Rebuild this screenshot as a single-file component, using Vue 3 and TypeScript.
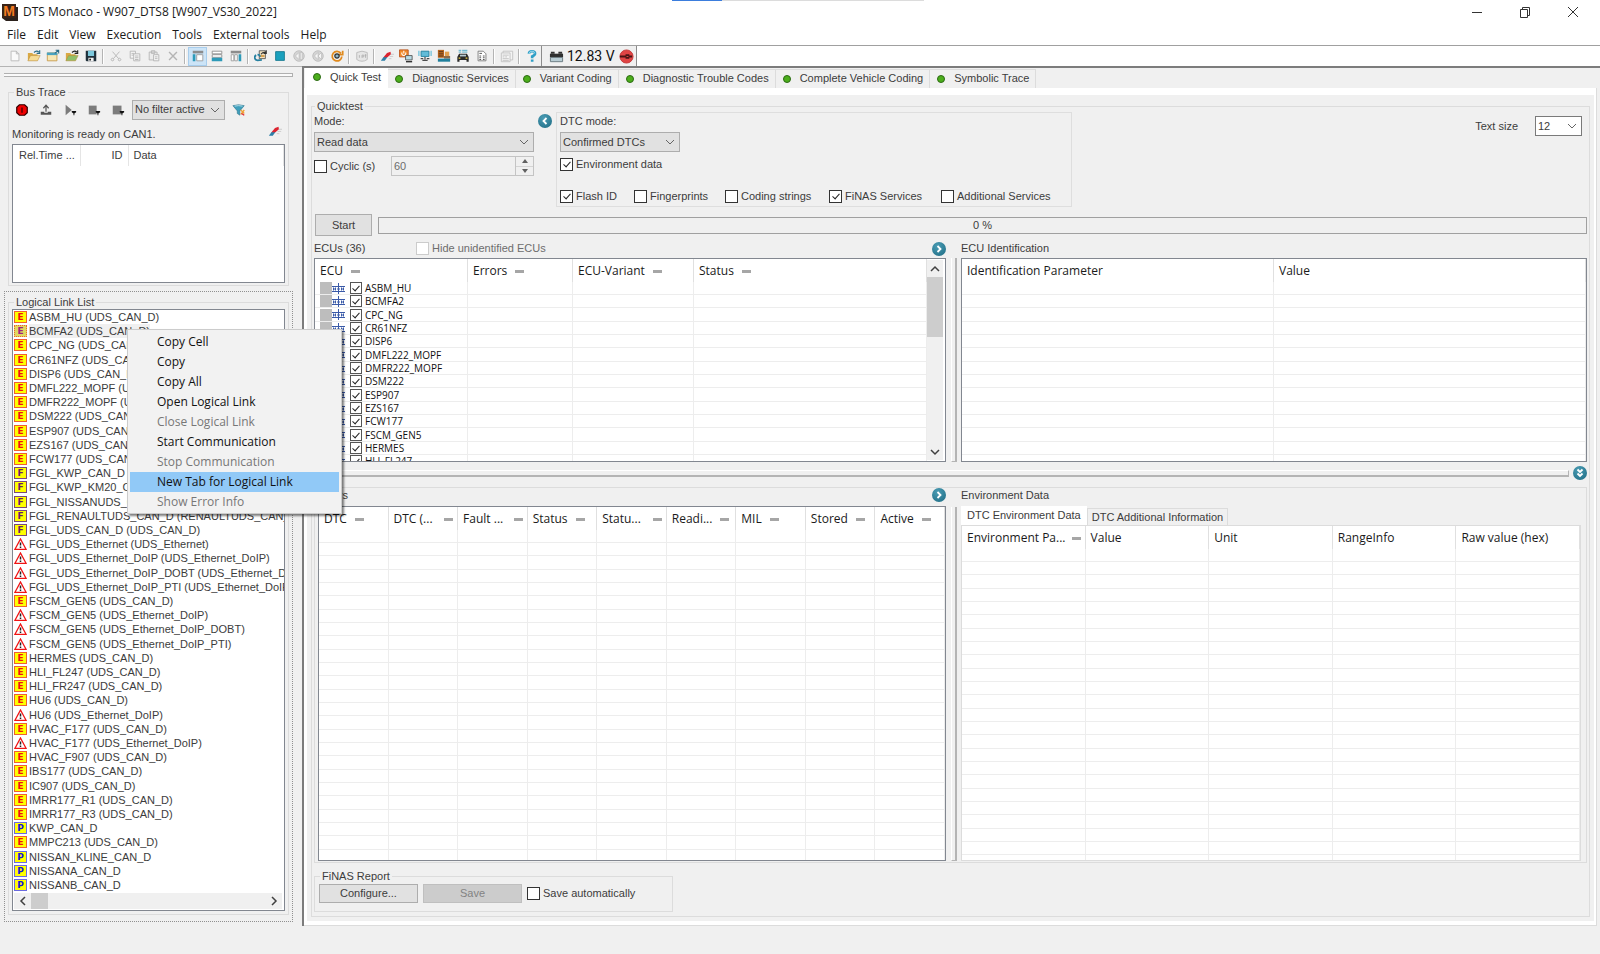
<script setup lang="ts">
import { ref } from 'vue'

interface Shape { d: string; f?: string; s?: string; w?: number }
interface Tool { label: string; shapes: Shape[]; active?: boolean; off?: boolean }
interface Column { title: string; width?: number; mark?: boolean; cut?: boolean }

const folder = (arrow: string, body = '#f5dc96'): Shape[] => [
  { d: 'M1 13V4.500H6L7 6H12V13Z', f: '#d9a945' },
  { d: 'M1 13.500L4 7.500H15L12 13.500Z', f: body, s: '#b98a35', w: 0.6 },
  { d: 'M8 4Q11 1 13.500 3.500M14.500 1.500V5H11', s: arrow, w: 1.3 },
]

const toolGroups: Tool[][] = [
  [
    { label: 'New', off: true, shapes: [{ d: 'M3.500 2.500H9.500L12.500 5.500V13.500H3.500ZM9.500 2.500V5.500H12.500', f: '#fafafa', s: '#b8b8b8' }] },
    { label: 'Open', shapes: folder('#2b6d86') },
    { label: 'Open workspace', shapes: [
      { d: 'M1.500 4.500H12.500V13.500H1.500Z', f: '#f7e7b5', s: '#c79a4a' },
      { d: 'M1 4H13V7H1Z', f: '#4aa3c0' },
      { d: 'M10 5L14 1.500M11 1.500H14.500V5', s: '#2b6d86', w: 1.2 },
    ] },
    { label: 'Import', shapes: folder('#222222', '#8fbf6a') },
    { label: 'Save', shapes: [
      { d: 'M2 2H14V14H3L2 13Z', f: '#1f2f3a' },
      { d: 'M4.500 2H11.500V8H4.500Z', f: '#7cc8dc' },
      { d: 'M5 10H11V14H5Z', f: '#f2f2f2' },
      { d: 'M6 11H8V13H6Z', f: '#222222' },
    ] },
  ],
  [
    { label: 'Cut', off: true, shapes: [{ d: 'M4 3L11 11M12 3L5 11M5 11A1.500 1.500 0 1 0 4.500 13.500A1.500 1.500 0 0 0 5 11M11 11A1.500 1.500 0 1 1 11.500 13.500A1.500 1.500 0 0 1 11 11', s: '#b4b4b4' }] },
    { label: 'Copy', off: true, shapes: [
      { d: 'M2.500 2.500H8.500V10.500H2.500ZM4 5H7M4 7H7', f: '#f6f6f6', s: '#b4b4b4' },
      { d: 'M6.500 5.500H13.500V13.500H6.500ZM8 8H12M8 10H12M8 12H12', f: '#f6f6f6', s: '#b4b4b4' },
    ] },
    { label: 'Paste', off: true, shapes: [
      { d: 'M2.500 3.500H11.500V12.500H2.500ZM5 2H9V5H5Z', f: '#ececec', s: '#b4b4b4' },
      { d: 'M7.500 6.500H13.500V13.500H7.500ZM9 9H12M9 11H12', f: '#f6f6f6', s: '#b4b4b4' },
    ] },
    { label: 'Delete', off: true, shapes: [{ d: 'M3.500 3.500L12.500 12.500M12.500 3.500L3.500 12.500', s: '#b4b4b4', w: 1.6 }] },
  ],
  [
    { label: 'Layout left', active: true, shapes: [
      { d: 'M2 2H14V5H2Z', f: '#8c8c8c' }, { d: 'M2 6H5V14H2Z', f: '#2d9ab8' },
      { d: 'M6.500 6.500H13.500V13.500H6.500Z', f: '#ffffff', s: '#9a9a9a' },
    ] },
    { label: 'Layout rows', shapes: [
      { d: 'M2.500 2.500H13.500V5.500H2.500ZM2.500 6.500H13.500V9.500H2.500Z', f: '#ffffff', s: '#8c8c8c' },
      { d: 'M2 10H14V14H2Z', f: '#2d9ab8' },
    ] },
    { label: 'Layout columns', shapes: [
      { d: 'M2 2H14V5H2Z', f: '#8c8c8c' },
      { d: 'M2.500 6.500H5.500V13.500H2.500ZM6.500 6.500H9.500V13.500H6.500Z', f: '#ffffff', s: '#9a9a9a' },
      { d: 'M11 6H14V14H11Z', f: '#2d9ab8' },
    ] },
  ],
  [
    { label: 'Restart', shapes: [
      { d: 'M6 2H13V11H6Z', f: '#f4e3c0', s: '#555555' },
      { d: 'M8 6Q10 3 14 4M14 1.500V5H11', s: '#333333', w: 1.3 },
      { d: 'M7 8H12', s: '#c98323', w: 1.6 },
      { d: 'M2.500 7A3.200 3.200 0 0 0 4 13L9 12.500M4 6.500Q6.500 6.500 7 9', s: '#2680a0', w: 2 },
    ] },
    { label: 'Stop', shapes: [{ d: 'M3 3H13V13H3Z', f: '#1aa0bd', s: '#13778f' }] },
    { label: 'Back', off: true, shapes: [{ d: 'M8 2A6 6 0 1 0 8 14A6 6 0 1 0 8 2', f: '#d4d4d4', s: '#bcbcbc' }, { d: 'M8 4V12L4 8ZM9.500 4H11.500V12H9.500Z', f: '#f6f6f6', s: '#b0b0b0', w: 0.6 }] },
    { label: 'Previous', off: true, shapes: [{ d: 'M8 2A6 6 0 1 0 8 14A6 6 0 1 0 8 2', f: '#d4d4d4', s: '#bcbcbc' }, { d: 'M8 4V12L4 8ZM12 4V12L8 8Z', f: '#f6f6f6', s: '#b0b0b0', w: 0.6 }] },
    { label: 'Refresh', shapes: [
      { d: 'M12.500 5A5.500 5.500 0 1 0 13.500 8.500M14.500 2V6.500H10', s: '#e08a1e', w: 2 },
      { d: 'M8 5.500A2.500 2.500 0 1 0 8 10.500A2.500 2.500 0 1 0 8 5.500', f: '#8fb5c4', s: '#333333', w: 1.4 },
    ] },
  ],
  [
    { label: 'Java job', off: true, shapes: [
      { d: 'M2 4Q8 1 14 4V12Q8 16 2 12Z', f: '#e6e6e6', s: '#b8b8b8' },
      { d: 'M5 7V10M8 10V7H10V9H8M12 6V10M11 7H13', s: '#b0b0b0' },
    ] },
  ],
  [
    { label: 'Erase', shapes: [
      { d: 'M1 13.500L4 9H8.500L5.500 13.500Z', f: '#2d7fa8' },
      { d: 'M4 9.500L8 4.500L12 3L12.500 6L8.500 9.500Z', f: '#dc2430' },
      { d: 'M12.500 6H16M11 8.500H15M10 11H13', s: '#c8c8c8' },
    ] },
    { label: 'Flash', shapes: [
      { d: 'M0.500 1H10.500V9H0.500Z', f: '#f08a2c', s: '#b8541c' },
      { d: 'M3.500 4A2.300 2.300 0 1 0 7.500 4M5.500 2V5', s: '#ffffff', w: 1.2 },
      { d: 'M7.500 7.500H15V12.500H7.500Z', f: '#b9dbe4', s: '#555555' },
      { d: 'M8 14.500H15', s: '#333333', w: 1.6 },
    ] },
    { label: 'Remote', shapes: [
      { d: 'M3.500 2.500H12.500V8.500H3.500Z', f: '#62bcd8', s: '#1f7f9c' },
      { d: 'M1 2V8M15 2V8', s: '#7cc6dc', w: 1.6 },
      { d: 'M8 9V12M5 13H11M3 11H6M10 11H13', s: '#4c4c4c', w: 1.4 },
    ] },
    { label: 'Modules', shapes: [
      { d: 'M1 1H8V10H1Z', f: '#b8641c' }, { d: 'M9 3H14V8H9Z', f: '#e0a050' },
      { d: 'M2 3H7M2 5.500H7M2 8H7', s: '#54361d' },
      { d: 'M8 8H15V11H8Z', f: '#8a6a4a' }, { d: 'M1 11H15V14.500H1Z', f: '#1f7f9c' },
    ] },
    { label: 'Vehicle', shapes: [
      { d: 'M3 1.500H6M7 1.500H13M3 3.500H6M7 3.500H13', s: '#45a5c4' },
      { d: 'M1.500 9L3.500 5.500H12.500L14.500 9V14.500H12V12.500H4V14.500H1.500Z', f: '#2a2a2a' },
      { d: 'M3 10.500H5M11 10.500H13', s: '#f0d040', w: 1.4 }, { d: 'M4.500 6.500H11.500V8.500H4.500Z', f: '#b8cbd2' },
    ] },
    { label: 'Report', shapes: [
      { d: 'M3.500 2.500H9.500L12.500 5.500V13.500H3.500Z', f: '#ffffff', s: '#777777' },
      { d: 'M5 5H8M5 8H7M9 8H11M5 10H7M9 10H11M5 12H7M9 12H11', s: '#444444' },
    ] },
  ],
  [
    { label: 'Overview', off: true, shapes: [{ d: 'M1.500 4.500H11.500V14.500H1.500ZM3.500 4.500V2.500H14.500V12.500H11.500M3 7H10M3 9H5M6 9H8M3 11H10M3 13H10', f: '#f4f4f4', s: '#c0c0c0' }] },
  ],
  [
    { label: 'Help', shapes: [
      { d: 'M4.500 5.500Q4.500 2.500 8 2.500Q11.500 2.500 11.500 5.200Q11.500 7 8.200 8.500V10.500M8.200 12V14.500', s: '#2f9fc6', w: 3 },
      { d: 'M4.500 5.500Q5 2.500 8 2.500Q11 2.500 11 5', s: '#a8e0f2', w: 1 },
    ] },
  ],
]

const menus = ['File', 'Edit', 'View', 'Execution', 'Tools', 'External tools', 'Help']
const tabs = ['Quick Test', 'Diagnostic Services', 'Variant Coding', 'Diagnostic Trouble Codes', 'Complete Vehicle Coding', 'Symbolic Trace']
const activeTab = ref('Quick Test')

const traceTools: Tool[] = [
  { label: 'Record', shapes: [{ d: 'M5 2H11L14 5V11L11 14H5L2 11V5Z', f: '#f00000', s: '#300000', w: 1.4 }, { d: 'M8 5V11', s: '#600000', w: 1.8 }] },
  { label: 'Export', shapes: [{ d: 'M8 3V10M5 6L8 2.500L11 6', s: '#555555', w: 1.4 }, { d: 'M2 10H6V11H10V10H14V13.500H2Z', f: '#555555' }] },
  { label: 'Play', shapes: [{ d: 'M3 2L10 8L3 14Z', f: '#7c7c7c' }, { d: 'M10 9H15V10.500L13 12V14H12V12L10 10.500Z', f: '#111111' }] },
  { label: 'Stop', shapes: [{ d: 'M2 3H11V13H2Z', f: '#7c7c7c' }, { d: 'M10 9H15V10.500L13 12V14H12V12L10 10.500Z', f: '#111111' }] },
  { label: 'Pause', shapes: [{ d: 'M2 3H12V13H2Z', f: '#7c7c7c' }, { d: 'M10 9H15V10.500L13 12V14H12V12L10 10.500Z', f: '#111111' }] },
]
const filterShapes: Shape[] = [
  { d: 'M1 3Q7.500 1 14 3L9 9V14L6 12V9Z', f: '#3f9fbc', s: '#2a6f86', w: 0.6 },
  { d: 'M3 3.500Q7.500 2.500 12 3.500', s: '#c4e6f0' },
  { d: 'M10 8L14 12M10 13L14 8', s: '#f0a030', w: 1.6 },
  { d: 'M11 12L14 14', s: '#dc2430', w: 1.4 },
]
const eraseShapes: Shape[] = toolGroups[5][0].shapes

const links: [string, string][] = [
  ['E', 'ASBM_HU (UDS_CAN_D)'], ['E', 'BCMFA2 (UDS_CAN_D)'], ['E', 'CPC_NG (UDS_CAN_D)'],
  ['E', 'CR61NFZ (UDS_CAN_D)'], ['E', 'DISP6 (UDS_CAN_D)'], ['E', 'DMFL222_MOPF (UDS_CAN_D)'],
  ['E', 'DMFR222_MOPF (UDS_CAN_D)'], ['E', 'DSM222 (UDS_CAN_D)'], ['E', 'ESP907 (UDS_CAN_D)'],
  ['E', 'EZS167 (UDS_CAN_D)'], ['E', 'FCW177 (UDS_CAN_D)'], ['F', 'FGL_KWP_CAN_D'],
  ['F', 'FGL_KWP_KM20_CAN_D'], ['F', 'FGL_NISSANUDS_CAN_D'], ['F', 'FGL_RENAULTUDS_CAN_D (RENAULTUDS_CAN_D)'],
  ['F', 'FGL_UDS_CAN_D (UDS_CAN_D)'], ['!', 'FGL_UDS_Ethernet (UDS_Ethernet)'],
  ['!', 'FGL_UDS_Ethernet_DoIP (UDS_Ethernet_DoIP)'], ['!', 'FGL_UDS_Ethernet_DoIP_DOBT (UDS_Ethernet_DoIP_DOBT)'],
  ['!', 'FGL_UDS_Ethernet_DoIP_PTI (UDS_Ethernet_DoIP_PTI)'], ['E', 'FSCM_GEN5 (UDS_CAN_D)'],
  ['!', 'FSCM_GEN5 (UDS_Ethernet_DoIP)'], ['!', 'FSCM_GEN5 (UDS_Ethernet_DoIP_DOBT)'],
  ['!', 'FSCM_GEN5 (UDS_Ethernet_DoIP_PTI)'], ['E', 'HERMES (UDS_CAN_D)'], ['E', 'HLI_FL247 (UDS_CAN_D)'],
  ['E', 'HLI_FR247 (UDS_CAN_D)'], ['E', 'HU6 (UDS_CAN_D)'], ['!', 'HU6 (UDS_Ethernet_DoIP)'],
  ['E', 'HVAC_F177 (UDS_CAN_D)'], ['!', 'HVAC_F177 (UDS_Ethernet_DoIP)'], ['E', 'HVAC_F907 (UDS_CAN_D)'],
  ['E', 'IBS177 (UDS_CAN_D)'], ['E', 'IC907 (UDS_CAN_D)'], ['E', 'IMRR177_R1 (UDS_CAN_D)'],
  ['E', 'IMRR177_R3 (UDS_CAN_D)'], ['P', 'KWP_CAN_D'], ['E', 'MMPC213 (UDS_CAN_D)'],
  ['P', 'NISSAN_KLINE_CAN_D'], ['P', 'NISSANA_CAN_D'], ['P', 'NISSANB_CAN_D'],
]

const menuItems: [string, boolean][] = [
  ['Copy Cell', true], ['Copy', true], ['Copy All', true], ['Open Logical Link', true],
  ['Close Logical Link', false], ['Start Communication', true], ['Stop Communication', false],
  ['New Tab for Logical Link', true], ['Show Error Info', false],
]

const options = ref([
  { label: 'Flash ID', on: true, width: 74 },
  { label: 'Fingerprints', on: false, width: 91 },
  { label: 'Coding strings', on: false, width: 104 },
  { label: 'FiNAS Services', on: true, width: 112 },
  { label: 'Additional Services', on: false, width: 120 },
])

const ecuColumns: Column[] = [
  { title: 'ECU', width: 153, mark: true }, { title: 'Errors', width: 105, mark: true },
  { title: 'ECU-Variant', width: 121, mark: true }, { title: 'Status', mark: true },
]
const ecus = ref(['ASBM_HU', 'BCMFA2', 'CPC_NG', 'CR61NFZ', 'DISP6', 'DMFL222_MOPF', 'DMFR222_MOPF', 'DSM222',
  'ESP907', 'EZS167', 'FCW177', 'FSCM_GEN5', 'HERMES', 'HLI_FL247'].map((name) => ({ name, on: true })))
const identColumns: Column[] = [{ title: 'Identification Parameter' }, { title: 'Value' }]
const errorColumns: Column[] = [
  { title: 'DTC', mark: true }, { title: 'DTC (...', mark: true, cut: true }, { title: 'Fault ...', mark: true, cut: true },
  { title: 'Status', mark: true }, { title: 'Statu...', mark: true, cut: true }, { title: 'Readi...', mark: true },
  { title: 'MIL', mark: true }, { title: 'Stored', mark: true }, { title: 'Active', mark: true },
]
const envColumns: Column[] = [
  { title: 'Environment Pa...', mark: true, cut: true }, { title: 'Value' }, { title: 'Unit' },
  { title: 'RangeInfo' }, { title: 'Raw value (hex)' },
]

const cyclic = ref(false)
const envData = ref(true)
const hideEcus = ref(false)
const autoSave = ref(false)
</script>

<template>
  <div class="app">
    <header class="titlebar">
      <svg class="logo" viewBox="0 0 18 18" width="18" height="18">
        <path d="M4 4H17V18H5L1 15V2Z" fill="#2b211c" />
        <path d="M1 1H15V15H1Z" fill="#3a2317" />
        <text x="8" y="13" text-anchor="middle" class="logo-letter">M</text>
      </svg>
      <h1>DTS Monaco - W907_DTS8 [W907_VS30_2022]</h1>
      <span class="drag-hint"></span>
      <div class="window-buttons">
        <button type="button" aria-label="Minimize"><svg viewBox="0 0 12 12"><path d="M1 6.500H11" /></svg></button>
        <button type="button" aria-label="Restore"><svg viewBox="0 0 12 12"><path d="M1.500 3.500H8.500V11.500H1.500ZM3.500 3.500V1.500H10.500V9.500H8.500" /></svg></button>
        <button type="button" aria-label="Close"><svg viewBox="0 0 12 12"><path d="M1 1L11 11M11 1L1 11" /></svg></button>
      </div>
    </header>

    <nav class="menubar">
      <button v-for="m in menus" :key="m" type="button">{{ m }}</button>
    </nav>

    <div class="toolbar">
      <div class="tools">
        <template v-for="(group, g) in toolGroups" :key="g">
          <span v-if="g > 0" class="sep"></span>
          <button v-for="t in group" :key="t.label" type="button" class="tool" :class="{ active: t.active }" :aria-label="t.label" :disabled="t.off">
            <svg viewBox="0 0 16 16"><path v-for="(s, i) in t.shapes" :key="i" :d="s.d" :fill="s.f ?? 'none'" :stroke="s.s ?? 'none'" :stroke-width="s.w ?? 1" /></svg>
          </button>
        </template>
      </div>
      <div class="voltage">
        <svg viewBox="0 0 16 16" width="15" height="15">
          <path d="M2 3H6V5H2ZM10 3H14V5H10Z" fill="#333" />
          <path d="M1 5H15V9H1Z" fill="#2f2f2f" />
          <path d="M1.500 9H14.500V13.500H1.500Z" fill="#b9cdd4" stroke="#6a7a80" />
        </svg>
        <span>12.83 V</span>
        <svg viewBox="0 0 16 16" width="15" height="15">
          <circle cx="8" cy="8" r="7" fill="#e04444" stroke="#c43c3c" />
          <path d="M1 7H7V5.500H11V10.500H7V9H1ZM11 7H14V9H11Z" fill="#4a1414" />
          <path d="M8 8H10" stroke="#e04444" />
        </svg>
      </div>
    </div>

    <div class="workspace">
      <aside class="side">
        <div class="grip"></div>
        <fieldset class="trace">
          <legend>Bus Trace</legend>
          <div class="trace-bar">
            <div class="trace-tools">
              <button v-for="t in traceTools" :key="t.label" type="button" class="trace-tool" :aria-label="t.label">
                <svg viewBox="0 0 16 16"><path v-for="(s, i) in t.shapes" :key="i" :d="s.d" :fill="s.f ?? 'none'" :stroke="s.s ?? 'none'" :stroke-width="s.w ?? 1" /></svg>
              </button>
            </div>
            <span class="combo filter">
              <select aria-label="Filter"><option>No filter active</option></select>
              <svg viewBox="0 0 10 6"><path d="M1 1L5 5L9 1" /></svg>
            </span>
            <button type="button" class="trace-tool" aria-label="Edit filter">
              <svg viewBox="0 0 16 16"><path v-for="(s, i) in filterShapes" :key="i" :d="s.d" :fill="s.f ?? 'none'" :stroke="s.s ?? 'none'" :stroke-width="s.w ?? 1" /></svg>
            </button>
          </div>
          <div class="trace-state">
            <span>Monitoring is ready on CAN1.</span>
            <button type="button" class="trace-tool" aria-label="Clear trace">
              <svg viewBox="0 0 16 16"><path v-for="(s, i) in eraseShapes" :key="i" :d="s.d" :fill="s.f ?? 'none'" :stroke="s.s ?? 'none'" :stroke-width="s.w ?? 1" /></svg>
            </button>
          </div>
          <div class="trace-list">
            <table>
              <thead><tr><th class="time">Rel.Time ...</th><th class="id">ID</th><th>Data</th></tr></thead>
            </table>
          </div>
        </fieldset>

        <div class="focus-frame">
          <fieldset class="links">
            <legend>Logical Link List</legend>
            <div class="link-box">
              <ul>
                <li v-for="(l, i) in links" :key="l[1]" :class="{ current: i === 1 }">
                  <svg v-if="l[0] === '!'" class="warn" viewBox="0 0 13 12">
                    <path d="M6.500 1L12 11.300H1Z" fill="#fff" stroke="#f01414" stroke-width="1.300" />
                    <path d="M6.500 4.500V7.500M6.500 8.500V10" stroke="#222" stroke-width="1.500" />
                  </svg>
                  <span v-else class="badge" :class="'kind-' + l[0]">{{ l[0] }}</span>
                  <span class="link-name">{{ l[1] }}</span>
                </li>
              </ul>
              <div class="hscroll">
                <button type="button" aria-label="Scroll left"><svg viewBox="0 0 8 10"><path d="M6 1L2 5L6 9" /></svg></button>
                <span class="thumb"></span>
                <button type="button" aria-label="Scroll right"><svg viewBox="0 0 8 10"><path d="M2 1L6 5L2 9" /></svg></button>
              </div>
            </div>
          </fieldset>
        </div>
      </aside>

      <main class="main">
        <div class="tabs" role="tablist">
          <button v-for="t in tabs" :key="t" type="button" role="tab" :aria-selected="t === activeTab" :class="{ on: t === activeTab }" @click="activeTab = t">
            <i class="dot"></i>{{ t }}
          </button>
        </div>
        <div class="page">
          <div class="panel">
            <fieldset class="quick">
              <legend>Quicktest</legend>
              <div class="settings">
                <div class="mode">
                  <label for="mode">Mode:</label>
                  <span class="combo">
                    <select id="mode"><option>Read data</option></select>
                    <svg viewBox="0 0 10 6"><path d="M1 1L5 5L9 1" /></svg>
                  </span>
                  <div class="cyclic">
                    <label class="check"><input v-model="cyclic" type="checkbox" />Cyclic (s)</label>
                    <span class="spin">
                      <input type="text" value="60" aria-label="Cycle seconds" disabled />
                      <span class="spin-buttons">
                        <button type="button" aria-label="Increase"><svg viewBox="0 0 6 4"><path d="M0 4L3 0L6 4Z" /></svg></button>
                        <button type="button" aria-label="Decrease"><svg viewBox="0 0 6 4"><path d="M0 0L3 4L6 0Z" /></svg></button>
                      </span>
                    </span>
                  </div>
                </div>
                <button type="button" class="round" aria-label="Collapse options"><svg viewBox="0 0 14 14"><path d="M8.500 4L5.500 7L8.500 10" /></svg></button>
                <div class="dtc">
                  <label for="dtc">DTC mode:</label>
                  <span class="combo">
                    <select id="dtc"><option>Confirmed DTCs</option></select>
                    <svg viewBox="0 0 10 6"><path d="M1 1L5 5L9 1" /></svg>
                  </span>
                  <label class="check"><input v-model="envData" type="checkbox" />Environment data</label>
                  <div class="options">
                    <label v-for="o in options" :key="o.label" class="check" :style="{ width: o.width + 'px' }"><input v-model="o.on" type="checkbox" />{{ o.label }}</label>
                  </div>
                </div>
                <div class="text-size">
                  <label for="size">Text size</label>
                  <span class="combo white">
                    <select id="size"><option>12</option></select>
                    <svg viewBox="0 0 10 6"><path d="M1 1L5 5L9 1" /></svg>
                  </span>
                </div>
              </div>

              <div class="run">
                <button type="button" class="push">Start</button>
                <div class="progress" role="progressbar" aria-valuenow="0" aria-label="Progress">0 %</div>
              </div>

              <div class="split upper">
                <section class="left">
                  <div class="caption">
                    <span class="count">ECUs (36)</span>
                    <label class="check muted"><input v-model="hideEcus" type="checkbox" disabled />Hide unidentified ECUs</label>
                    <button type="button" class="round" aria-label="Expand ECUs"><svg viewBox="0 0 14 14"><path d="M5.500 4L8.500 7L5.500 10" /></svg></button>
                  </div>
                  <div class="grid-box with-scroll">
                    <div class="clip">
                      <table class="grid">
                        <colgroup><col v-for="c in ecuColumns" :key="c.title" :style="c.width ? { width: c.width + 'px' } : {}" /></colgroup>
                        <thead><tr><th v-for="c in ecuColumns" :key="c.title"><span class="head">{{ c.title }}<i v-if="c.mark"></i></span></th></tr></thead>
                        <tbody>
                          <tr v-for="e in ecus" :key="e.name">
                            <td>
                              <label class="ecu">
                                <i class="block"></i>
                                <svg viewBox="0 0 13 11"><path d="M0 3.500H13M0 8.500H13M6.500 0V11M1 6H4M5 6H8M9 6H12" /><path d="M1.500 4.500V7.500M3.500 4.500V7.500M9.500 4.500V7.500M11.500 4.500V7.500" /></svg>
                                <input v-model="e.on" type="checkbox" />{{ e.name }}
                              </label>
                            </td>
                            <td></td><td></td><td></td>
                          </tr>
                        </tbody>
                      </table>
                    </div>
                    <div class="vscroll">
                      <button type="button" aria-label="Scroll up"><svg viewBox="0 0 10 8"><path d="M1 6L5 2L9 6" /></svg></button>
                      <span class="thumb"></span>
                      <button type="button" aria-label="Scroll down"><svg viewBox="0 0 10 8"><path d="M1 2L5 6L9 2" /></svg></button>
                    </div>
                  </div>
                </section>
                <div class="divider"></div>
                <section class="right">
                  <div class="caption"><span>ECU Identification</span></div>
                  <div class="grid-box">
                    <div class="clip">
                      <table class="grid">
                        <thead><tr><th v-for="c in identColumns" :key="c.title"><span class="head">{{ c.title }}</span></th></tr></thead>
                        <tbody><tr v-for="r in 14" :key="r"><td></td><td></td></tr></tbody>
                      </table>
                    </div>
                  </div>
                </section>
              </div>

              <div class="bar-row">
                <div class="bar"></div>
                <button type="button" class="round" aria-label="Collapse lower area"><svg viewBox="0 0 14 14"><path d="M4.500 3.500L7 6L9.500 3.500M4.500 7.500L7 10L9.500 7.500" /></svg></button>
              </div>

              <div class="split lower">
                <section class="left">
                  <div class="caption">
                    <span>Errors</span>
                    <button type="button" class="round" aria-label="Expand errors"><svg viewBox="0 0 14 14"><path d="M5.500 4L8.500 7L5.500 10" /></svg></button>
                  </div>
                  <div class="grid-box">
                    <div class="clip">
                      <table class="grid">
                        <thead><tr><th v-for="c in errorColumns" :key="c.title"><span class="head" :class="{ cut: c.cut }">{{ c.title }}<i v-if="c.mark"></i></span></th></tr></thead>
                        <tbody><tr v-for="r in 26" :key="r"><td v-for="c in errorColumns" :key="c.title"></td></tr></tbody>
                      </table>
                    </div>
                  </div>
                </section>
                <div class="divider"></div>
                <section class="right">
                  <div class="caption"><span>Environment Data</span></div>
                  <div class="env-tabs" role="tablist">
                    <button type="button" role="tab" aria-selected="true" class="on">DTC Environment Data</button>
                    <button type="button" role="tab" aria-selected="false">DTC Additional Information</button>
                  </div>
                  <div class="grid-box env">
                    <div class="clip">
                      <table class="grid">
                        <thead><tr><th v-for="c in envColumns" :key="c.title"><span class="head" :class="{ cut: c.cut }">{{ c.title }}<i v-if="c.mark"></i></span></th></tr></thead>
                        <tbody><tr v-for="r in 26" :key="r"><td v-for="c in envColumns" :key="c.title"></td></tr></tbody>
                      </table>
                    </div>
                  </div>
                </section>
              </div>

              <fieldset class="report">
                <legend>FiNAS Report</legend>
                <div class="report-row">
                  <button type="button" class="push">Configure...</button>
                  <button type="button" class="push" disabled>Save</button>
                  <label class="check"><input v-model="autoSave" type="checkbox" />Save automatically</label>
                </div>
              </fieldset>
            </fieldset>
          </div>
        </div>
      </main>
    </div>
    <footer class="status"></footer>

    <div class="context" role="menu">
      <button v-for="m in menuItems" :key="m[0]" type="button" role="menuitem" :disabled="!m[1]" :class="{ hot: m[0].startsWith('New Tab') }">{{ m[0] }}</button>
    </div>
  </div>
</template>

<style>
body { margin: 0; }
</style>

<style scoped>
.app {
  position: relative;
  display: flex;
  flex-direction: column;
  height: 100vh;
  overflow: hidden;
  background: #f0f0f0;
  color: #3c3c3c;
  font: 11px/13px "Liberation Sans", Arial, sans-serif;
}
.app *, .app *::before, .app *::after { box-sizing: border-box; }
button, select, input { margin: 0; padding: 0; font: inherit; color: inherit; border: 0; border-radius: 0; background: none; }
button { display: flex; align-items: center; justify-content: center; white-space: nowrap; }
svg { flex: none; }
fieldset { min-width: 0; margin: 0; padding: 0 3px 3px; border: 1px solid #dcdcdc; }
legend { margin-left: 1px; padding: 0 2px; }
table { border-collapse: collapse; border-spacing: 0; }

.titlebar, .menubar { display: flex; align-items: center; background: #fff; color: #1a1a1a; font: 12px/16px "Open Sans", "Noto Sans", sans-serif; }
.titlebar { position: relative; height: 24px; }
.titlebar h1 { margin: 0 auto 0 4px; font: inherit; }
.logo { margin-left: 1px; }
.logo-letter { font: bold 14px "Liberation Sans", sans-serif; fill: #f47b20; }
.drag-hint { position: absolute; top: 0; left: 42%; width: 252px; height: 1px; background: linear-gradient(90deg, #3b7ddd 50px, #dcdcdc 50px); }
.window-buttons { display: flex; padding-right: 3px; }
.window-buttons button { width: 48px; height: 24px; }
.window-buttons svg { width: 12px; height: 12px; fill: none; stroke: #333; }
.menubar { height: 21px; gap: 11px; padding-left: 7px; }

.toolbar { display: flex; height: 21px; background: #fff; border-top: 1px solid #a0a0a0; }
.tools { display: flex; align-items: center; padding-left: 5px; background: #f0f0f0; }
.tool { width: 19px; height: 19px; }
.tool.active { background: #cce4f7; outline: 1px solid #a8cdec; outline-offset: -1px; }
.tool svg { width: 14px; height: 14px; }
.sep { width: 2px; height: 15px; margin: 0 2px; background: #b4b4b4; border-right: 1px solid #fff; }
.voltage { display: flex; align-items: center; gap: 3px; padding: 0 2px 0 7px; background: #f0f0f0; border: solid #8c8c8c; border-width: 0 1px; color: #111; font: 14px/18px Roboto, sans-serif; }
.voltage span { margin-right: 1px; }

.workspace { display: flex; flex: 1; min-height: 0; }
.side { display: flex; flex-direction: column; width: 302px; flex: none; padding: 6px 9px 4px 4px; border-top: 1px solid #b4b4b4; }
.grip { height: 4px; margin-bottom: 9px; border: 1px solid #b0b0b0; border-left: 0; background: #fafafa; }
.side fieldset { margin: 0 4px; }
.side legend { margin-left: 2px; }
.trace { height: 200px; flex: none; }
.side .trace { margin-bottom: 5px; }
.trace-bar { display: flex; align-items: center; height: 21px; gap: 6px; padding-left: 2px; }
.trace-tools { display: flex; gap: 8px; }
.trace-tool { width: 16px; height: 16px; }
.trace-tool svg { width: 14px; height: 14px; }
.combo { position: relative; display: flex; height: 20px; border: 1px solid #adadad; background: #e1e1e1; }
.combo select { flex: 1; width: 100%; padding: 0 2px; appearance: none; }
.combo svg { position: absolute; right: 4px; top: 6px; width: 10px; height: 6px; pointer-events: none; fill: none; stroke: #666; }
.combo.white { background: #fff; border-color: #7a7a7a; }
.filter { width: 93px; }
.trace-state { display: flex; align-items: flex-end; justify-content: space-between; height: 24px; padding: 0 2px 3px 0; }
.trace-state .trace-tool { margin-bottom: 2px; }
.trace-list { height: 139px; background: #fff; border: 1px solid #828790; }
.trace-list table { width: 100%; table-layout: fixed; }
.trace-list th { height: 21px; padding: 0 5px; border-right: 1px solid #e5e5e5; font-weight: normal; text-align: left; }
.trace-list .time { width: 67px; padding-right: 0; padding-left: 6px; white-space: nowrap; }
.trace-list .id { width: 48px; text-align: right; }

.focus-frame { display: flex; flex: 1; min-height: 0; padding: 4px 0 6px; border: 1px dotted #909090; }
.focus-frame .links { display: flex; flex: 1; flex-direction: column; min-height: 0; margin: 0 3px; }
.link-box { display: flex; flex-direction: column; height: 100%; overflow: hidden; background: #fff; border: 1px solid #828790; }
.link-box ul { display: grid; grid-auto-rows: 1fr; flex: 1; min-height: 0; margin: 0; padding: 0 0 1px 1px; overflow: hidden; list-style: none; }
.link-box li { display: flex; align-items: center; min-height: 0; gap: 2px; white-space: nowrap; line-height: 14px; }
.badge { display: flex; align-items: center; justify-content: center; flex: none; width: 13px; height: 12px; border: 1px solid; background: #ff0; font: bold 9px/10px "DejaVu Sans", sans-serif; }
.kind-E { color: #f01010; border-color: #f06030; }
.kind-F { color: #6a1a6a; border-color: #7a4a7a; }
.kind-P { color: #1414d8; border-color: #6a6ae0; }
.warn { width: 13px; height: 12px; }
.current .badge { color: #a02080; border-style: dotted; background: #e0d860; }
.current .link-name { background: #f0f0f0; }
.hscroll { display: flex; height: 16px; margin: 0 2px 1px 1px; background: #f0f0f0; }
.hscroll button { width: 17px; }
.hscroll button:last-child { margin-left: auto; }
.hscroll .thumb { width: 17px; background: #cdcdcd; }
.hscroll svg { width: 8px; height: 10px; }
.hscroll svg, .vscroll svg { fill: none; stroke: #404040; stroke-width: 1.500; }

.main { display: flex; flex: 1; flex-direction: column; min-width: 0; border: solid #7c7c7c; border-width: 2px 0 0 2px; }
.tabs { display: flex; align-items: flex-end; height: 20px; padding-left: 1px; }
.tabs button { height: 19px; gap: 9px; padding: 0 6px 1px 7px; border: solid #dcdcdc; border-width: 1px 1px 0 0; }
.tabs .on { height: 20px; padding: 0 6px 3px 8px; border-color: #fff; background: #fff; }
.dot { width: 8px; height: 8px; border: 1px solid #2c6a14; border-radius: 50%; background: #4cae1c; }
.page { display: flex; flex: 1; min-height: 0; margin: 0 3px 0 0; padding: 7px 2px 4px 3px; background: #fff; border: solid #dcdcdc; border-width: 0 1px 1px 0; }
.panel { display: flex; flex: 1; min-width: 0; padding: 5px 4px 4px; background: #f0f0f0; }
.quick { display: flex; flex: 1; flex-direction: column; padding: 0 2px 4px; }
.settings { display: flex; height: 95px; align-items: flex-start; }
.mode { display: flex; flex-direction: column; width: 220px; gap: 3px; }
.mode > label, .dtc > label:first-child { line-height: 16px; }
.cyclic { display: flex; align-items: center; justify-content: space-between; padding-top: 1px; }
.check { display: flex; align-items: center; gap: 3px; white-space: nowrap; }
input[type="checkbox"] { position: relative; flex: none; width: 13px; height: 13px; appearance: none; border: 1px solid #333; background: #fff; }
input[type="checkbox"]:checked::after { content: ""; position: absolute; left: 4px; top: 1px; width: 4px; height: 7px; border: solid #222; border-width: 0 1px 1px 0; transform: rotate(42deg); }
input[type="checkbox"]:disabled { border-color: #ccc; }
.muted { color: #6d6d6d; }
.spin { display: flex; width: 143px; height: 20px; border: 1px solid #c4c4c4; }
.spin input { flex: 1; min-width: 0; padding: 0 2px; color: #6d6d6d; }
.spin-buttons { display: flex; flex-direction: column; width: 18px; border-left: 1px solid #c4c4c4; }
.spin-buttons button { flex: 1; }
.spin-buttons button + button { border-top: 1px solid #d4d4d4; }
.spin svg { width: 6px; height: 4px; fill: #606060; }
.round { width: 14px; height: 14px; border-radius: 50%; background: #26788f; background: radial-gradient(circle at 40% 30%, #4a9cb4, #1c6a82); }
.round svg { width: 14px; height: 14px; fill: none; stroke: #fff; stroke-width: 1.800; }
.settings .round { margin: 1px 4px 0; }
.dtc { display: flex; flex-direction: column; height: 95px; min-width: 516px; gap: 3px; padding: 0 3px; border: 1px solid #dedede; margin-top: -1px; }
.dtc .combo { width: 120px; }
.dtc > .check { margin-top: 3px; }
.options { display: flex; margin-top: 16px; }
.text-size { display: flex; align-items: center; gap: 17px; margin: 3px 5px 0 auto; }
.text-size .combo { width: 47px; }

.run { display: flex; align-items: center; gap: 6px; margin: 6px 0 3px; padding-left: 1px; }
.push { height: 22px; width: 57px; border: 1px solid #adadad; background: #e1e1e1; }
.push:disabled { background: #ccc; color: #838383; border-color: #bfbfbf; }
.progress { display: flex; align-items: center; justify-content: center; flex: 1; height: 17px; border: 1px solid #a0a0a0; }

.split { display: flex; min-height: 0; }
.split section { display: flex; flex-direction: column; min-width: 0; }
.upper { height: 223px; flex: none; }
.upper .left { flex: 632 1 0; }
.upper .right { flex: 626 1 0; }
.lower { flex: 1; margin: 0; padding: 0 5px 1px 3px; border: 1px solid #dcdcdc; }
.lower .left { flex: 628 1 0; }
.lower .right { flex: 620 1 0; }
.caption { display: flex; align-items: center; height: 19px; flex: none; }
.lower .caption { height: 18px; padding-bottom: 4px; }
.count { width: 102px; }
.caption .round { margin-left: auto; }
.grid-box { display: flex; flex: 1; min-height: 0; background: #fff; border: 1px solid #828790; }
.clip { flex: 1; min-width: 0; overflow: hidden; }
.env { border-color: #dcdcdc; }
.divider { width: 6px; margin: 19px 4px 0 5px; flex: none; border: solid #b4b4b4; border-width: 0 2px 1px 0; border-left: 1px solid #fff; }
.grid { width: 100%; table-layout: fixed; border-collapse: separate; }
.grid th { height: 23px; padding: 1px 0 0 5px; border-right: 1px solid #e0e0e0; text-align: left; color: #1a1a1a; font: 12px/16px "Open Sans", "Noto Sans", sans-serif; white-space: nowrap; }
.head { display: flex; align-items: center; gap: 8px; padding-right: 4px; }
.head i { flex: none; width: 9px; height: 3px; background: #a6a6a6; }
.head.cut i { margin-left: auto; }
.head.cut { gap: 0; }
.grid td { height: 13px; padding: 0 0 0 5px; border: solid #ededed; border-width: 0 1px 1px 0; }
.grid tr:nth-child(3n) td { height: 14px; }
.ecu { display: flex; align-items: center; height: 12px; color: #111; font: 10px/12px "Open Sans", "Noto Sans", sans-serif; }
.ecu .block { width: 12px; height: 12px; background: #bdbdbd; }
.ecu svg { width: 13px; height: 11px; margin-right: 5px; fill: none; stroke: #3a5aa8; }
.ecu input[type="checkbox"] { width: 12px; height: 12px; margin-right: 3px; border-color: #555; }
.ecu input[type="checkbox"]:checked::after { left: 3px; }
.vscroll { display: flex; flex-direction: column; width: 16px; margin: 1px 2px 1px 0; background: #f0f0f0; }
.vscroll button { height: 17px; }
.vscroll button:last-child { margin-top: auto; }
.vscroll .thumb { height: 60px; background: #cdcdcd; }
.vscroll svg { width: 10px; height: 8px; }

.bar-row { display: flex; align-items: center; justify-content: space-between; height: 14px; margin: 4px 0 7px; gap: 4px; }
.bar { flex: 1; height: 7px; border: solid #b4b4b4; border-width: 0 1px 2px 0; border-top: 1px solid #fff; }
.env-tabs { display: flex; height: 19px; flex: none; align-items: flex-end; }
.env-tabs button { height: 17px; padding: 0 4px; border: 1px solid #dcdcdc; border-bottom: 0; }
.env-tabs .on { height: 19px; padding: 0 5px 2px; background: #fff; border-color: #fff; }

.report { width: 359px; margin-top: 7px; padding: 1px 4px 8px; flex: none; }
.report-row { display: flex; align-items: center; gap: 5px; }
.report .push { width: 99px; height: 19px; }
.status { height: 28px; flex: none; }

.context { position: absolute; left: 127px; top: 329px; width: 215px; padding: 2px 2px 1px; background: #f2f2f2; border: 1px solid #ccc; box-shadow: 2px 2px 2px rgba(0, 0, 0, 0.5); }
.context button { width: 100%; height: 20px; padding-left: 27px; justify-content: flex-start; color: #111; font: 12px/20px "Open Sans", "Noto Sans", sans-serif; }
.context button:disabled { color: #777; }
.context .hot { background: #91c9f7; }
</style>
